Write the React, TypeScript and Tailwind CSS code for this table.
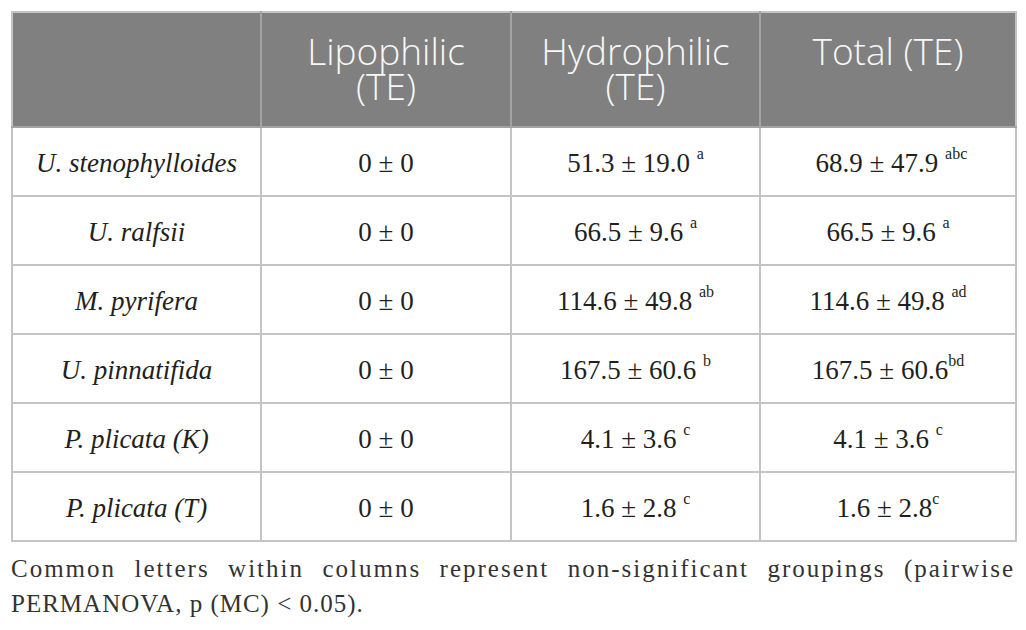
const rows = [
  { name: "U. stenophylloides", lipo: "0 ± 0", hydro: "51.3 ± 19.0 ", hydroSup: "a", total: " 68.9 ± 47.9 ", totalSup: "abc" },
  { name: "U. ralfsii", lipo: "0 ± 0", hydro: "66.5 ± 9.6 ", hydroSup: "a", total: "66.5 ± 9.6 ", totalSup: "a" },
  { name: "M. pyrifera", lipo: "0 ± 0", hydro: "114.6 ± 49.8 ", hydroSup: "ab", total: "114.6 ± 49.8 ", totalSup: "ad" },
  { name: "U. pinnatifida", lipo: "0 ± 0", hydro: "167.5 ± 60.6 ", hydroSup: "b", total: "167.5 ± 60.6", totalSup: "bd" },
  { name: "P. plicata (K)", lipo: "0 ± 0", hydro: "4.1 ± 3.6 ", hydroSup: "c", total: "4.1 ± 3.6 ", totalSup: "c" },
  { name: "P. plicata (T)", lipo: "0 ± 0", hydro: "1.6 ± 2.8 ", hydroSup: "c", total: "1.6 ± 2.8", totalSup: "c" },
];

function Sup({ children }: { children: string }) {
  return <sup className="relative top-[-3px] align-super text-[16px] leading-none">{children}</sup>;
}

export default function App() {
  return (
    <div className="min-h-[630px] w-[1026px] bg-white px-[11px] pt-[11px] font-['Liberation_Serif',serif] text-[#231f20]">
      <table className="w-[1004px] table-fixed border-collapse border-2 border-[#c4c4c4]">
        <colgroup>
          <col className="w-[249px]" />
          <col className="w-[250px]" />
          <col className="w-[249px]" />
          <col className="w-[256px]" />
        </colgroup>
        <thead>
          <tr className="h-[115px] bg-[#808080] font-['Open_Sans',sans-serif] text-[37px] leading-[35px] text-[#f7f7f7]">
            <th className="border-2 border-[#a3a3a3] border-t-[#c4c4c4] border-l-[#c4c4c4]" />
            <th className="border-2 border-[#a3a3a3] border-t-[#c4c4c4] pb-[4px] font-light">
              Lipophilic
              <br />
              (TE)
            </th>
            <th className="border-2 border-[#a3a3a3] border-t-[#c4c4c4] pb-[4px] font-light">
              Hydrophilic
              <br />
              (TE)
            </th>
            <th className="border-2 border-[#a3a3a3] border-t-[#c4c4c4] border-r-[#c4c4c4] pb-[39px] font-light">
              Total (TE)
            </th>
          </tr>
        </thead>
        <tbody className="text-[27px] leading-none">
          {rows.map((r) => (
            <tr key={r.name} className="h-[69px]">
              <td className="border-2 border-[#c4c4c4] pt-[3px] text-center italic">{r.name}</td>
              <td className="border-2 border-[#c4c4c4] pt-[3px] text-center">{r.lipo}</td>
              <td className="border-2 border-[#c4c4c4] pt-[3px] text-center whitespace-pre">
                {r.hydro}
                <Sup>{r.hydroSup}</Sup>
              </td>
              <td className="border-2 border-[#c4c4c4] pt-[3px] text-center whitespace-pre">
                {r.total}
                <Sup>{r.totalSup}</Sup>
              </td>
            </tr>
          ))}
        </tbody>
      </table>
      <div className="mt-[9px] w-[1004px] text-[25px] leading-[35px] text-[#333]">
        <p className="text-justify tracking-[2px] [text-align-last:justify]">
          Common letters within columns represent non-significant groupings (pairwise
        </p>
        <p className="tracking-[1px]">PERMANOVA, p (MC) &lt; 0.05).</p>
      </div>
    </div>
  );
}
